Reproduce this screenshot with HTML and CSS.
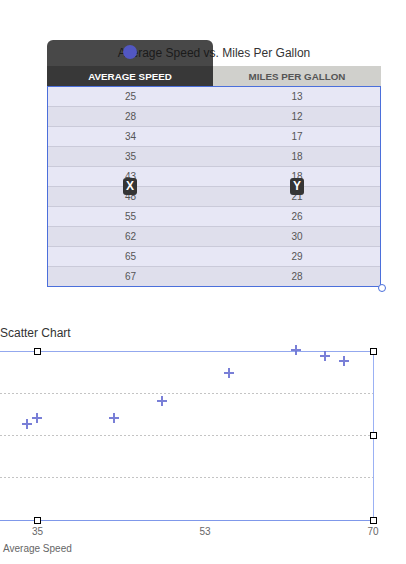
FILE: index.html
```html
<!DOCTYPE html>
<html>
<head>
<meta charset="utf-8">
<link rel="stylesheet" href="styles.css">
</head>
<body>
<div class="widget">
  <div class="title">Average Speed vs. Miles Per Gallon</div>
  <div class="head">
    <div class="hcell sel">AVERAGE SPEED</div>
    <div class="hcell">MILES PER GALLON</div>
  </div>
  <div class="rows">
    <div class="row"><span>25</span><span>13</span></div>
    <div class="row"><span>28</span><span>12</span></div>
    <div class="row"><span>34</span><span>17</span></div>
    <div class="row"><span>35</span><span>18</span></div>
    <div class="row"><span>43</span><span>18</span></div>
    <div class="row"><span>48</span><span>21</span></div>
    <div class="row"><span>55</span><span>26</span></div>
    <div class="row"><span>62</span><span>30</span></div>
    <div class="row"><span>65</span><span>29</span></div>
    <div class="row"><span>67</span><span>28</span></div>
  </div>
  <div class="col-overlay"></div>
  <span class="dot"></span>
  <span class="badge bx">X</span>
  <span class="badge by">Y</span>
  <span class="resize"></span>
</div>

<div class="chart">
  <div class="chart-title">Scatter Chart</div>
  <svg class="plot" width="406" height="223" viewBox="0 341 406 223" xmlns="http://www.w3.org/2000/svg">
    <g stroke="#c4c4c4" stroke-width="1" stroke-dasharray="2 2">
      <line x1="0" y1="393.5" x2="373" y2="393.5"/>
      <line x1="0" y1="435.5" x2="373" y2="435.5"/>
      <line x1="0" y1="477.5" x2="373" y2="477.5"/>
    </g>
    <line x1="0" y1="351.5" x2="373" y2="351.5" stroke="#93a8ee" stroke-width="1"/>
    <line x1="373.5" y1="351" x2="373.5" y2="520" stroke="#9bb1f4" stroke-width="1"/>
    <line x1="0" y1="520.5" x2="373" y2="520.5" stroke="#7f98ea" stroke-width="1"/>
    <g stroke="#6a71d3" stroke-width="2" stroke-opacity="0.9">
      <path d="M22 424h10M27 419v10"/>
      <path d="M32 418h10M37 413v10"/>
      <path d="M109 418h10M114 413v10"/>
      <path d="M157 401h10M162 396v10"/>
      <path d="M224 373h10M229 368v10"/>
      <path d="M291 350h10M296 345v10"/>
      <path d="M320 356h10M325 351v10"/>
      <path d="M339 361h10M344 356v10"/>
    </g>
    <g fill="#fff" stroke="#000" stroke-width="1">
      <rect x="34.5" y="348.5" width="6" height="6"/>
      <rect x="370.5" y="348.5" width="6" height="6"/>
      <rect x="370.5" y="432.5" width="6" height="6"/>
      <rect x="370.5" y="517.5" width="6" height="6"/>
      <rect x="34.5" y="517.5" width="6" height="6"/>
    </g>
    <g class="axis" fill="#666" font-size="10" text-anchor="middle">
      <text x="37.5" y="535">35</text>
      <text x="205" y="535">53</text>
      <text x="373" y="535">70</text>
    </g>
    <text class="axis" x="3" y="552" fill="#666" font-size="10">Average Speed</text>
  </svg>
</div>
</body>
</html>
```
FILE: styles.css
```css
html, body {
  margin: 0;
  padding: 0;
  overflow: hidden;
  background: #fff;
}
body {
  font-family: "Liberation Sans", Arial, sans-serif;
  color: #333;
  width: 406px;
  height: 564px;
}
.widget {
  position: relative;
  margin: 40px 0 0 47px;
  width: 334px;
}
.title {
  height: 26px;
  line-height: 26px;
  text-align: center;
  font-size: 12px;
  color: #333;
}
.head {
  display: grid;
  grid-template-columns: 166px 1fr;
  height: 20px;
  background: #d0d0cc;
}
.hcell {
  display: flex;
  align-items: center;
  justify-content: center;
  font-size: 9.8px;
  font-weight: bold;
  color: #555;
}
.hcell.sel {
  background: #383838;
  color: #fff;
}
.rows {
  border: 1px solid #4b6fdb;
}
.row {
  display: grid;
  grid-template-columns: 166px 1fr;
  height: 19px;
  border-bottom: 1px solid #cacad9;
  background: #e7e7f5;
  font-size: 10px;
  color: #555;
}
.row:nth-child(even) {
  background: #dfdfec;
}
.row:last-child {
  border-bottom: none;
}
.row span {
  display: flex;
  align-items: center;
  justify-content: center;
}
.row span:first-child {
  margin-left: -1px;
}
.col-overlay {
  position: absolute;
  left: 0;
  top: 0;
  width: 166px;
  height: 26px;
  border-radius: 6px 6px 0 0;
  background: rgba(20, 20, 20, 0.78);
}
.dot {
  position: absolute;
  left: 76px;
  top: 5px;
  width: 14px;
  height: 14px;
  border-radius: 50%;
  background: #5257c2;
}
.badge {
  position: absolute;
  top: 138px;
  width: 14px;
  height: 17px;
  border-radius: 3px;
  background: #353535;
  color: #fff;
  font-size: 12px;
  font-weight: bold;
  line-height: 17px;
  text-align: center;
}
.bx { left: 76px; }
.by { left: 243px; }
.resize {
  position: absolute;
  right: -5px;
  bottom: -5px;
  width: 6px;
  height: 6px;
  border-radius: 50%;
  background: #fff;
  border: 1.5px solid #4b6fdb;
}
.chart {
  margin-top: 38px;
}
.chart-title {
  height: 16px;
  line-height: 16px;
  font-size: 12px;
  color: #333;
}
.plot {
  display: block;
}
.axis {
  font-family: "Liberation Sans", Arial, sans-serif;
}
```
